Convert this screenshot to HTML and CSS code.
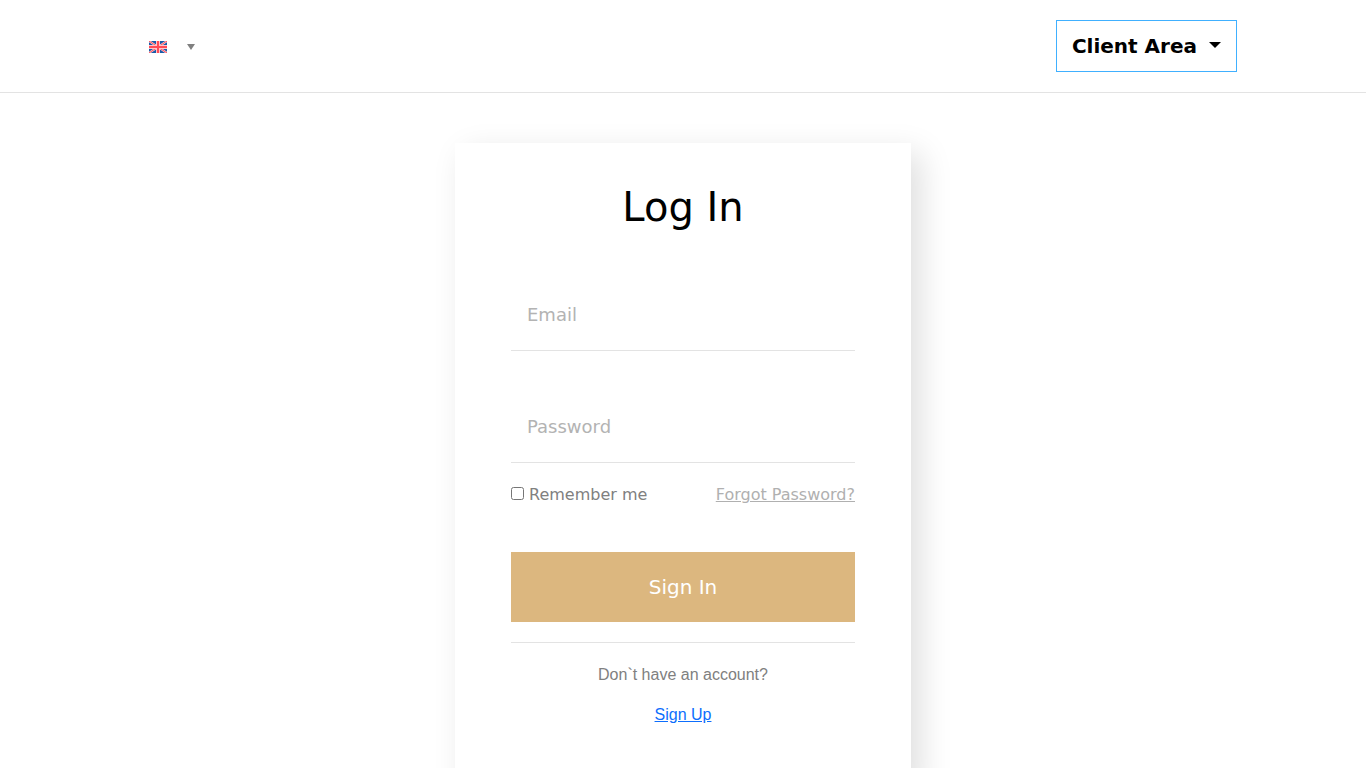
FILE: index.html
```html
<!DOCTYPE html>
<html lang="en">
<head>
<meta charset="utf-8">
<meta name="viewport" content="width=device-width, initial-scale=1">
<title>Log In</title>
<link rel="stylesheet" href="styles.css">
</head>
<body>
<header class="header">
  <div class="header-inner">
    <button class="language" type="button" aria-label="Language: English">
      <svg class="flag" viewBox="0 0 18 12" aria-hidden="true">
        <rect width="18" height="12" fill="#1b5aa8"/>
        <path d="M0 0L18 12M18 0L0 12" stroke="#ffd5d8" stroke-width="2"/>
        <path d="M0 0L18 12M18 0L0 12" stroke="#ff4b55" stroke-width="1"/>
        <path d="M9 0V12M0 6H18" stroke="#ffc5ca" stroke-width="4"/>
        <path d="M9 0V12M0 6H18" stroke="#ff4b55" stroke-width="2"/>
      </svg>
      <span class="language-arrow"></span>
    </button>
    <button class="client-area" type="button">Client Area <span class="caret"></span></button>
  </div>
</header>
<main class="page">
  <section class="card">
    <h1 class="title">Log In</h1>
    <form class="form">
      <input class="field" type="email" placeholder="Email" aria-label="Email">
      <input class="field field-password" type="password" placeholder="Password" aria-label="Password">
      <div class="options">
        <label class="remember" for="remember"><input class="checkbox" type="checkbox" id="remember">Remember me</label>
        <a class="forgot" href="#">Forgot Password?</a>
      </div>
      <button class="submit" type="submit">Sign In</button>
    </form>
    <div class="signup">
      <p class="signup-text">Don`t have an account?</p>
      <a class="signup-link" href="#">Sign Up</a>
    </div>
  </section>
</main>
</body>
</html>
```
FILE: styles.css
```css
* { box-sizing: border-box; }
html { scrollbar-width: none; }
body {
  margin: 0;
  background: #fff;
  color: #000;
  font: 16px/24px "DejaVu Sans", sans-serif;
}
button, input { font-family: inherit; }
.header {
  padding: 20px;
  border-bottom: 1px solid #e3e3e3;
}
.header-inner {
  display: flex;
  align-items: center;
  justify-content: space-between;
  max-width: 1108px;
  margin: 0 auto;
}
.language {
  display: flex;
  align-items: center;
  gap: 20px;
  padding: 2px 20px 0;
  border: 0;
  background: none;
}
.flag { width: 18px; height: 12px; }
.language-arrow {
  border-top: 6px solid #808080;
  border-right: 4px solid transparent;
  border-left: 4px solid transparent;
}
.client-area {
  padding: 10px 15px;
  border: 1px solid #40b0ff;
  background: #fff;
  color: #000;
  font-size: 20px;
  font-weight: 700;
  line-height: 30px;
}
.caret {
  display: inline-block;
  margin-left: 5px;
  border-top: 6px solid #000;
  border-right: 6px solid transparent;
  border-left: 6px solid transparent;
  vertical-align: 5px;
}
.page { padding: 50px 20px; }
.card {
  max-width: 456px;
  margin: 0 auto;
  padding: 40px 56px 56px;
  background: #fff;
  box-shadow: 10px 10px 30px rgba(0, 0, 0, 0.13);
}
.title {
  margin: 0 0 48px;
  font-size: 40px;
  font-weight: 400;
  line-height: 48px;
  text-align: center;
}
.field {
  display: block;
  width: 100%;
  height: 72px;
  padding: 0 16px;
  border: 0;
  border-bottom: 1px solid #e3e3e3;
  border-radius: 0;
  background: transparent;
  color: #000;
  font-size: 18px;
}
.field::placeholder { color: #b3b3b3; opacity: 1; }
.field-password { margin-top: 40px; }
.options {
  display: flex;
  align-items: center;
  justify-content: space-between;
  margin-top: 20px;
}
.remember { color: #808080; }
.checkbox { width: 13px; height: 13px; margin: 0 5px 0 0; }
.forgot { color: #b0b0b0; }
.submit {
  display: block;
  width: 100%;
  margin-top: 45px;
  padding: 20px;
  border: 0;
  background: #dcb77f;
  color: #fff;
  font-size: 20px;
  line-height: 30px;
}
.signup {
  margin-top: 20px;
  padding-top: 20px;
  border-top: 1px solid #e3e3e3;
  font-family: "Liberation Sans", Arial, sans-serif;
  text-align: center;
}
.signup-text { margin: 0 0 16px; color: #808080; }
.signup-link { color: #0d6efd; }
```
